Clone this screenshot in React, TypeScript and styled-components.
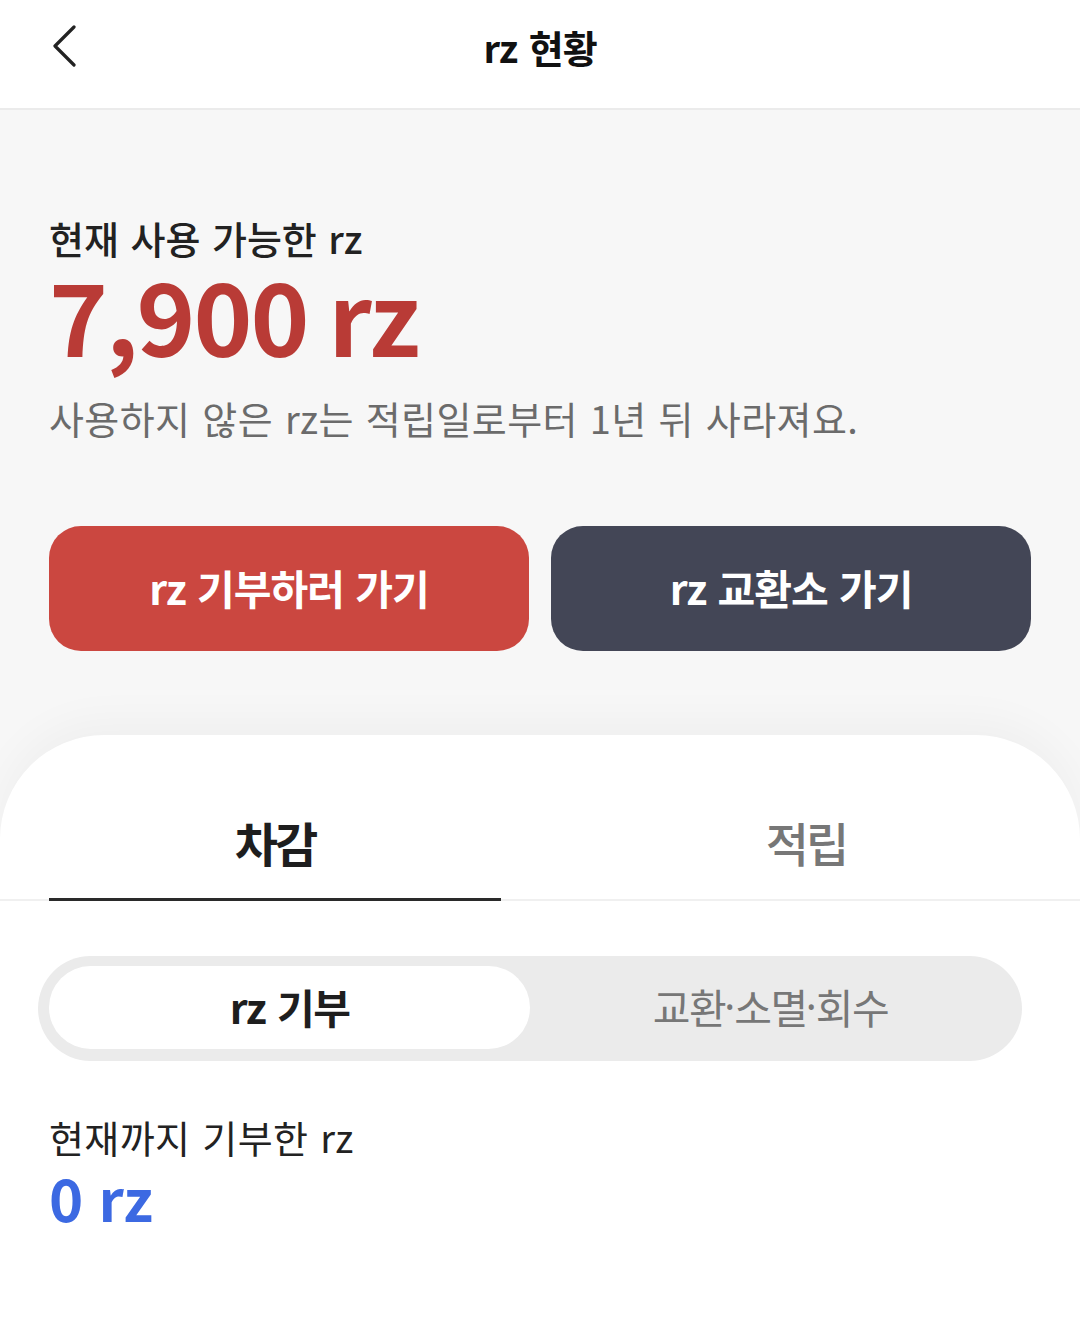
import React, { useState } from "react";
import styled, { createGlobalStyle } from "styled-components";

const GlobalStyle = createGlobalStyle`
  html, body { margin: 0; padding: 0; background: #f7f7f7; }
  body { font-family: "Noto Sans CJK KR", "Noto Sans", sans-serif; }
  * { box-sizing: border-box; }
`;

const Page = styled.div`
  width: 1080px;
  min-height: 1323px;
  display: flex;
  flex-direction: column;
  background: #f7f7f7;
`;

const Header = styled.header`
  height: 110px;
  background: #fff;
  border-bottom: 2px solid #ebebeb;
  display: flex;
  align-items: center;
  justify-content: center;
  position: relative;
`;

const BackButton = styled.button`
  position: absolute;
  left: 40px;
  top: 20px;
  width: 50px;
  height: 52px;
  border: 0;
  background: transparent;
  padding: 0;
  display: flex;
  align-items: center;
  justify-content: center;
`;

const Title = styled.h1`
  margin: 0 0 16px;
  font-size: 38px;
  font-weight: 700;
  letter-spacing: -1px;
  word-spacing: 4px;
  color: #111;
`;

const Summary = styled.section`
  padding: 100px 49px 84px;
  display: flex;
  flex-direction: column;
`;

const Label = styled.div`
  font-size: 38px;
  font-weight: 500;
  letter-spacing: 0;
  word-spacing: 3px;
  color: #222;
  line-height: 56px;
`;

const BigAmount = styled.div`
  font-size: 100px;
  font-weight: 700;
  color: #b93b36;
  line-height: 100px;
  letter-spacing: -2px;
  margin-top: -2px;
`;

const Notice = styled.div`
  font-size: 38px;
  font-weight: 400;
  letter-spacing: 0.4px;
  word-spacing: 3px;
  color: #6b6b6b;
  line-height: 56px;
  margin-top: 26px;
`;

const ButtonRow = styled.div`
  display: grid;
  grid-template-columns: 1fr 1fr;
  gap: 22px;
  margin-top: 80px;
`;

const ActionButton = styled.button<{ $variant: "red" | "dark" }>`
  height: 125px;
  border: 0;
  border-radius: 32px;
  background: ${(p) => (p.$variant === "red" ? "#cb4740" : "#434656")};
  color: #fff;
  font-family: inherit;
  font-size: 41px;
  font-weight: 700;
  letter-spacing: -1px;
  word-spacing: 3px;
  display: flex;
  align-items: center;
  justify-content: center;
  padding-bottom: 4px;
`;

const Card = styled.section`
  flex: 1;
  background: #fff;
  border-radius: 104px 104px 0 0;
  box-shadow: 0 -14px 44px rgba(0, 0, 0, 0.035);
  display: flex;
  flex-direction: column;
`;

const TabBar = styled.div`
  display: grid;
  grid-template-columns: 452px 452px;
  justify-content: space-between;
  padding: 0 48px 0 49px;
  border-bottom: 2px solid #f0f0f0;
  height: 166px;
`;

const Tab = styled.button<{ $active: boolean }>`
  border: 0;
  background: transparent;
  font-family: inherit;
  font-size: 47px;
  font-weight: ${(p) => (p.$active ? 700 : 500)};
  letter-spacing: -3px;
  color: ${(p) => (p.$active ? "#1e1e1e" : "#777")};
  display: flex;
  align-items: flex-end;
  justify-content: center;
  padding: 0 0 22px;
  margin-bottom: -2px;
  border-bottom: 3px solid ${(p) => (p.$active ? "#2a2a2a" : "transparent")};
`;

const Body = styled.div`
  padding: 55px 49px 0;
  display: flex;
  flex-direction: column;
`;

const Segmented = styled.div`
  width: 984px;
  height: 105px;
  margin-left: -11px;
  background: #ebebeb;
  border-radius: 53px;
  padding: 10px 11px 12px;
  display: grid;
  grid-template-columns: 1fr 1fr;
`;

const SegmentItem = styled.button<{ $active: boolean }>`
  border: 0;
  border-radius: 42px;
  background: ${(p) => (p.$active ? "#fff" : "transparent")};
  font-family: inherit;
  font-size: 41px;
  font-weight: ${(p) => (p.$active ? 700 : 400)};
  letter-spacing: -1.5px;
  word-spacing: 4px;
  color: ${(p) => (p.$active ? "#1e1e1e" : "#777")};
  display: flex;
  align-items: center;
  justify-content: center;
  padding-bottom: 4px;
`;

const Dot = styled.span`
  font-family: "Noto Sans", sans-serif;
  letter-spacing: 0;
  margin: 0 -1px;
`;

const DonatedLabel = styled.div`
  margin-top: 48px;
  font-size: 38px;
  font-weight: 400;
  letter-spacing: 0.4px;
  word-spacing: 3px;
  color: #222;
  line-height: 56px;
`;

const DonatedAmount = styled.div`
  font-size: 58px;
  font-weight: 700;
  color: #3c69e2;
  line-height: 64px;
  letter-spacing: 0;
  word-spacing: 2px;
`;

export default function App() {
  const [tab, setTab] = useState(0);
  const [seg, setSeg] = useState(0);
  return (
    <>
      <GlobalStyle />
      <Page>
        <Header>
          <BackButton aria-label="뒤로">
            <svg width="26" height="42" viewBox="0 0 26 42" fill="none">
              <path d="M22 2 L3 21 L22 40" stroke="#222" strokeWidth="3.2" strokeLinecap="round" strokeLinejoin="round" />
            </svg>
          </BackButton>
          <Title>rz 현황</Title>
        </Header>
        <Summary>
          <Label>현재 사용 가능한 rz</Label>
          <BigAmount>7,900 rz</BigAmount>
          <Notice>사용하지 않은 rz는 적립일로부터 1년 뒤 사라져요.</Notice>
          <ButtonRow>
            <ActionButton $variant="red">rz 기부하러 가기</ActionButton>
            <ActionButton $variant="dark">rz 교환소 가기</ActionButton>
          </ButtonRow>
        </Summary>
        <Card>
          <TabBar>
            <Tab $active={tab === 0} onClick={() => setTab(0)}>차감</Tab>
            <Tab $active={tab === 1} onClick={() => setTab(1)}>적립</Tab>
          </TabBar>
          <Body>
            <Segmented>
              <SegmentItem $active={seg === 0} onClick={() => setSeg(0)}>rz 기부</SegmentItem>
              <SegmentItem $active={seg === 1} onClick={() => setSeg(1)}>
                교환<Dot>·</Dot>소멸<Dot>·</Dot>회수
              </SegmentItem>
            </Segmented>
            <DonatedLabel>현재까지 기부한 rz</DonatedLabel>
            <DonatedAmount>0 rz</DonatedAmount>
          </Body>
        </Card>
      </Page>
    </>
  );
}
